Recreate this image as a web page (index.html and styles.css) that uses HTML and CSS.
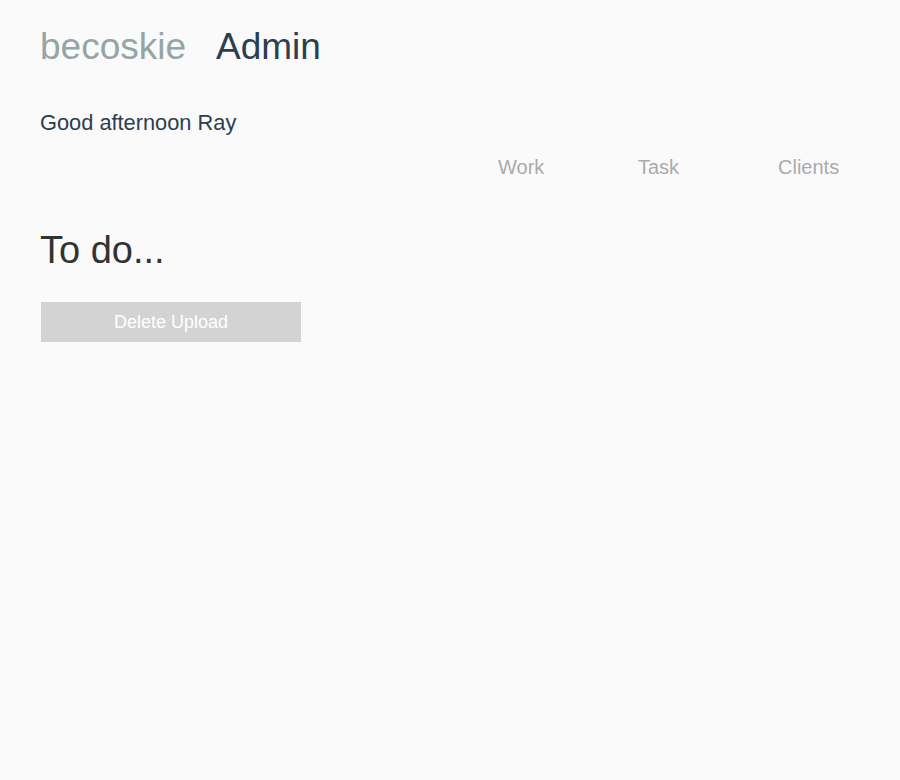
FILE: index.html
```html
<!DOCTYPE html>
<html>
<head>
<meta charset="utf-8">
<link rel="stylesheet" href="styles.css">
</head>
<body>
<div class="page">
  <header class="brand">
    <span class="brand-name">becoskie</span>
    <span class="brand-area">Admin</span>
  </header>
  <p class="greeting">Good afternoon Ray</p>
  <nav class="nav">
    <a class="nav-item">Work</a>
    <a class="nav-item">Task</a>
    <a class="nav-item nav-last">Clients</a>
  </nav>
  <h1 class="todo">To do...</h1>
  <button class="btn">Delete Upload</button>
</div>
</body>
</html>
```
FILE: styles.css
```css
html, body {
  margin: 0;
  padding: 0;
  background: #fafafa;
  font-family: "Liberation Sans", Arial, sans-serif;
}
.page {
  padding: 27px 40px 0 40px;
  display: flex;
  flex-direction: column;
  align-items: flex-start;
}
.brand {
  display: flex;
  gap: 30px;
  font-size: 37px;
  line-height: 40px;
  height: 40px;
}
.brand-name { color: #95a5a6; }
.brand-area { color: #2c3e50; }
.greeting {
  margin: 43px 0 0 0;
  font-size: 21.8px;
  line-height: 26px;
  color: #2c3e50;
}
.nav {
  align-self: stretch;
  display: flex;
  margin-top: 19px;
  padding-left: 458px;
  font-size: 20px;
  line-height: 24px;
}
.nav-item {
  width: 140px;
  color: #aaaaaa;
}
.nav-last { width: auto; }
.todo {
  margin: 47px 0 0 0;
  font-size: 38px;
  font-weight: normal;
  line-height: 48px;
  color: #333333;
}
.btn {
  margin: 28px 0 0 1px;
  width: 260px;
  height: 40px;
  border: none;
  background: #d3d3d3;
  color: #ffffff;
  font-family: "Liberation Sans", Arial, sans-serif;
  font-size: 18px;
  padding: 0;
}
```
